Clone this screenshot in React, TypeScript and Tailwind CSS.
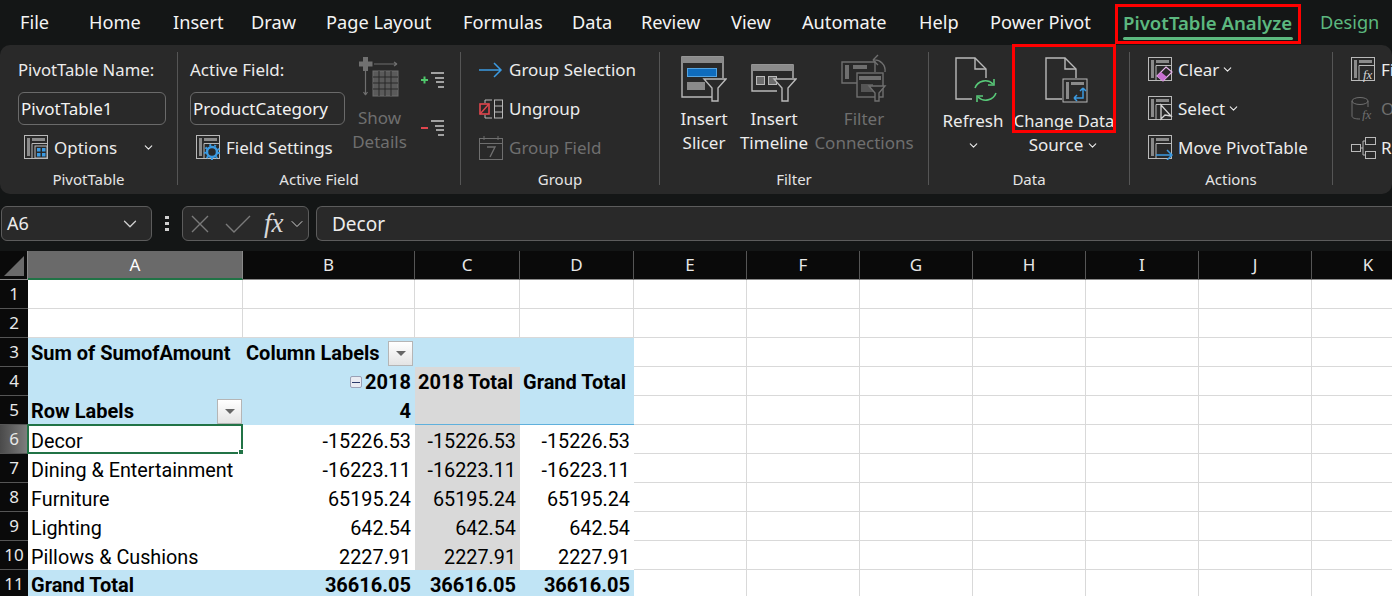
import type { ReactNode } from 'react'
import { ChevronDown } from 'lucide-react'

const tabs = [
  { label: 'File', w: 'w-[69px]' },
  { label: 'Home', w: 'w-[84px]' },
  { label: 'Insert', w: 'w-[78px]' },
  { label: 'Draw', w: 'w-[75px]' },
  { label: 'Page Layout', w: 'w-[137px]' },
  { label: 'Formulas', w: 'w-[109px]' },
  { label: 'Data', w: 'w-[69px]' },
  { label: 'Review', w: 'w-[90px]' },
  { label: 'View', w: 'w-[71px]' },
  { label: 'Automate', w: 'w-[117px]' },
  { label: 'Help', w: 'w-[71px]' },
  { label: 'Power Pivot', w: 'w-[133px]' },
]

const S = '#b9b9b9'
const D = '#6f6f6f'

function PivotBase({ children, color = S }: { children?: ReactNode; color?: string }) {
  return (
    <svg width="25" height="25" viewBox="0 0 25 25" fill="none">
      <rect x="0.5" y="0.5" width="23" height="23" stroke={color} />
      <rect x="8" y="3" width="13" height="3" fill="#8a8a8a" />
      <rect x="3" y="3" width="3" height="18" fill="#8a8a8a" />
      <path d="M8 8.5H23M8 8.5V23" stroke={color} />
      {children}
    </svg>
  )
}

function DocIcon({ children, className }: { children?: ReactNode; className?: string }) {
  return (
    <svg width="46" height="46" viewBox="0 0 46 46" fill="none" className={className}>
      <path d="M17 42H1V1H20L31 12V21" stroke={S} strokeWidth="1.4" />
      <path d="M20 1V12H31" stroke={S} strokeWidth="1.4" />
      {children}
    </svg>
  )
}

function SlicerIcon() {
  return (
    <svg width="46" height="46" viewBox="0 0 46 46" fill="none">
      <path d="M34 41H1V1H42V22" stroke={S} strokeWidth="1.4" />
      <rect x="1" y="1" width="41" height="6" fill="#8a8a8a" />
      <rect x="6.5" y="12.5" width="29" height="8" fill="#0f6cbd" stroke="#56a4e0" />
      <rect x="6" y="26" width="18" height="8" fill="#8a8a8a" />
      <path d="M23 23H45L37 32V45H31V32Z" fill="#292929" stroke={S} strokeWidth="1.4" />
    </svg>
  )
}

function TimelineIcon() {
  return (
    <svg width="46" height="38" viewBox="0 0 46 38" fill="none">
      <path d="M26 27H1V1H42V14" stroke={S} strokeWidth="1.4" />
      <rect x="1" y="1" width="41" height="6" fill="#8a8a8a" />
      <rect x="5.5" y="12.5" width="8" height="8" stroke={S} fill="#6d6d6d" />
      <rect x="17.5" y="12.5" width="8" height="8" stroke={S} fill="#6d6d6d" />
      <path d="M23 15H45L37 24V37H31V24Z" fill="#292929" stroke={S} strokeWidth="1.4" />
    </svg>
  )
}

function ConnectionsIcon() {
  return (
    <svg width="46" height="48" viewBox="0 0 46 48" fill="none">
      <path d="M34 18V8H1V29H16" stroke={D} strokeWidth="1.4" />
      <rect x="4" y="11" width="4" height="14" fill={D} />
      <rect x="12" y="11" width="14" height="4" fill={D} />
      <path d="M32 6C39 5 45 11 44 18M32 6L37 1M32 6L37 11" stroke={D} strokeWidth="1.4" />
      <rect x="16" y="19" width="26" height="24" fill="#292929" stroke={D} strokeWidth="1.4" />
      <rect x="18" y="22" width="22" height="4" fill={D} />
      <rect x="20" y="30" width="12" height="8" fill="#555" />
      <path d="M28 32H44L38 39V47H34V39Z" fill="#292929" stroke={D} strokeWidth="1.4" />
    </svg>
  )
}

function ShowDetailsIcon() {
  return (
    <svg width="42" height="42" viewBox="0 0 42 42" fill="none">
      <path d="M4 2H9V6.5H13.5V11.5H9V16H4V11.5H-0.5V6.5H4Z" fill="#707070" />
      <path d="M15 9H38M38 9L35 7M38 9L35 11M6.5 16V40M6.5 40L4.5 37M6.5 40L8.5 37" stroke={D} strokeWidth="1.2" />
      <rect x="14" y="16" width="25" height="25" fill="#5a5a5a" stroke={D} />
      <path d="M20 16V41M26 16V41M32 16V41M14 22H39M14 28H39M14 34H39" stroke="#292929" />
    </svg>
  )
}

function ExpandIcon({ minus }: { minus?: boolean }) {
  return (
    <svg width="24" height="18" viewBox="0 0 24 18" fill="none">
      <path d="M10 2H23M14 7H23M15 11H23M17 16H23" stroke="#c9c9c9" strokeWidth="1.4" />
      {minus ? (
        <path d="M0 9H7" stroke="#e0464e" strokeWidth="2" />
      ) : (
        <path d="M0 9H7M3.5 5.5V12.5" stroke="#4fc76b" strokeWidth="2" />
      )}
    </svg>
  )
}

function SmallRow({ icon, label, dim, chevron }: { icon: ReactNode; label: string; dim?: boolean; chevron?: boolean }) {
  return (
    <div className="flex h-[39px] items-center">
      <div className="flex w-[30px] shrink-0 items-center">{icon}</div>
      <span className={dim ? 'text-[#6f6f6f]' : 'text-[#ececec]'}>{label}</span>
      {chevron && <ChevronDown size={13} strokeWidth={2} className="ml-[2px] text-[#ececec]" />}
    </div>
  )
}

function LargeButton({ icon, lines, w, dim, iconBox = 'h-[57px] pb-[5px]' }: { icon: ReactNode; lines: ReactNode[]; w: string; dim?: boolean; iconBox?: string }) {
  return (
    <div className={`flex flex-col items-center ${w} ${dim ? 'text-[#6f6f6f]' : 'text-[#ececec]'}`}>
      <div className={`flex items-end justify-center ${iconBox}`}>{icon}</div>
      {lines.map((l, i) => (
        <div key={i} className="flex h-[24px] items-center justify-center whitespace-nowrap">
          {l}
        </div>
      ))}
    </div>
  )
}

function Group({ w, pad = '', label, children }: { w: string; pad?: string; label: string; children: ReactNode }) {
  return (
    <div className={`flex shrink-0 flex-col ${w}`}>
      <div className={`flex h-[118px] ${pad}`}>{children}</div>
      <div className="flex h-[22px] items-center justify-center text-[15px] text-[#e4e4e4]">{label}</div>
    </div>
  )
}

function Sep() {
  return <div className="mt-[2px] h-[133px] w-px shrink-0 bg-[#555555]" />
}

function TextBox({ w, value }: { w: string; value: string }) {
  return (
    <div className={`flex h-[33px] items-center rounded-[6px] border border-[#6a6a6a] pl-[2px] text-[#f2f2f2] ${w}`}>{value}</div>
  )
}

function Ribbon() {
  return (
    <div className="flex h-[149px] shrink-0 items-start overflow-hidden rounded-[10px] bg-[#292929] pt-[5px] text-[17px]">
      <Group w="w-[177px]" pad="pl-[18px]" label="PivotTable">
        <div className="flex flex-col">
          <div className="flex h-[39px] items-center text-[16.7px] text-[#ececec]">PivotTable Name:</div>
          <div className="flex h-[39px] items-center">
            <TextBox w="w-[148px]" value="PivotTable1" />
          </div>
          <div className="flex h-[39px] items-center pl-[6px] text-[#ececec]">
            <PivotBase>
              <rect x="11" y="11" width="12" height="12" fill="#292929" stroke={S} />
              <rect x="13" y="13" width="3.5" height="3.5" fill="#3b9ae1" />
              <rect x="13" y="18" width="3.5" height="3.5" fill="#3b9ae1" />
              <rect x="18" y="13" width="3.5" height="3.5" fill="#3b9ae1" />
              <rect x="18" y="18" width="3.5" height="3.5" fill="#3b9ae1" />
            </PivotBase>
            <span className="ml-[5px]">Options</span>
            <ChevronDown size={13} strokeWidth={2} className="ml-[25px]" />
          </div>
        </div>
      </Group>
      <Sep />
      <Group w="w-[282px]" pad="pl-[12px]" label="Active Field">
        <div className="flex w-[162px] flex-col">
          <div className="flex h-[39px] items-center text-[#ececec]">Active Field:</div>
          <div className="flex h-[39px] items-center">
            <TextBox w="w-[155px]" value="ProductCategory" />
          </div>
          <div className="flex h-[39px] items-center pl-[6px] text-[#ececec]">
            <PivotBase>
              <circle cx="16" cy="17" r="5" fill="#292929" stroke="#3b9ae1" strokeWidth="2.5" />
              <circle cx="16" cy="17" r="7" stroke="#3b9ae1" strokeDasharray="2 3" strokeWidth="2" />
            </PivotBase>
            <span className="ml-[5px] whitespace-nowrap">Field Settings</span>
          </div>
        </div>
        <LargeButton w="w-[55px]" dim icon={<ShowDetailsIcon />} iconBox="h-[56px] pb-[9px]" lines={['Show', 'Details']} />
        <div className="ml-[14px] flex flex-col gap-[30px] pt-[21px]">
          <ExpandIcon />
          <ExpandIcon minus />
        </div>
      </Group>
      <Sep />
      <Group w="w-[198px]" pad="pl-[18px]" label="Group">
        <div className="flex flex-col">
          <SmallRow
            label="Group Selection"
            icon={
              <svg width="24" height="18" viewBox="0 0 24 18" fill="none">
                <path d="M0 9H22M15 2L22 9L15 16" stroke="#3b9ae1" strokeWidth="1.5" />
              </svg>
            }
          />
          <SmallRow
            label="Ungroup"
            icon={
              <svg width="24" height="20" viewBox="0 0 24 20" fill="none">
                <rect x="1" y="5" width="9" height="10" stroke="#e0464e" strokeWidth="1.6" />
                <path d="M1 15L10 5" stroke="#e0464e" strokeWidth="1.4" />
                <path d="M13 1H6V4M13 19H6V16" stroke={S} />
                <rect x="15.5" y="1" width="8" height="18" stroke={S} />
                <path d="M15.5 7H23.5M15.5 13H23.5" stroke={S} />
              </svg>
            }
          />
          <SmallRow
            dim
            label="Group Field"
            icon={
              <svg width="24" height="24" viewBox="0 0 24 24" fill="none">
                <rect x="0.5" y="2.5" width="23" height="21" stroke={D} />
                <path d="M0.5 7.5H23.5M5 0V4M19 0V4" stroke={D} />
                <path d="M8 11H16L11 21" stroke={D} strokeWidth="1.4" />
              </svg>
            }
          />
        </div>
      </Group>
      <Sep />
      <Group w="w-[268px]" pad="pl-[9px]" label="Filter">
        <LargeButton w="w-[70px]" icon={<SlicerIcon />} lines={['Insert', 'Slicer']} />
        <LargeButton w="w-[70px]" icon={<TimelineIcon />} lines={['Insert', 'Timeline']} />
        <LargeButton w="w-[110px]" dim icon={<ConnectionsIcon />} lines={['Filter', 'Connections']} />
      </Group>
      <Sep />
      <Group w="w-[200px]" pad="pl-[0px]" label="Data">
        <LargeButton
          w="w-[88px]"
          iconBox="h-[59px] pb-[6px]"
          icon={
            <DocIcon className="ml-[10px]">
              <path d="M20 31A11 11 0 0 1 38 27M41 36A11 11 0 0 1 23 40" stroke="#58c878" strokeWidth="1.6" />
              <path d="M39 22V28H33M22 45V39H28" stroke="#58c878" strokeWidth="1.6" />
            </DocIcon>
          }
          lines={['Refresh', <ChevronDown key="c" size={13} strokeWidth={2} />]}
        />
        <LargeButton
          w="w-[94px]"
          iconBox="h-[59px] pb-[6px]"
          icon={
            <DocIcon className="ml-[8px]">
              <rect x="18" y="22" width="24" height="23" fill="#292929" stroke={S} />
              <rect x="26" y="25" width="13" height="3" fill="#8a8a8a" />
              <rect x="21" y="25" width="3" height="17" fill="#8a8a8a" />
              <path d="M38 31V41H29M38 31L35 34M38 31L41 34M29 41L32 38M29 41L32 44" stroke="#3b9ae1" strokeWidth="1.5" />
            </DocIcon>
          }
          lines={[
            <span key="d" className="text-[16.5px]">
              Change Data
            </span>,
            <span key="s" className="flex items-center">
              Source
              <ChevronDown size={13} strokeWidth={2} className="ml-[3px]" />
            </span>,
          ]}
        />
      </Group>
      <Sep />
      <Group w="w-[202px]" pad="pl-[18px]" label="Actions">
        <div className="flex flex-col">
          <SmallRow
            label="Clear"
            chevron
            icon={
              <PivotBase>
                <path d="M18 10L24 15L15 24L9 19Z" fill="#292929" stroke="#e3b3e8" strokeWidth="1.2" />
                <path d="M15 24L9 19L13 15L19 20Z" fill="#c76fd1" />
              </PivotBase>
            }
          />
          <SmallRow
            label="Select"
            chevron
            icon={
              <PivotBase>
                <path d="M13 9V23L17 19L23 20Z" fill="#292929" stroke="#d5d5d5" strokeWidth="1.3" />
              </PivotBase>
            }
          />
          <SmallRow
            label="Move PivotTable"
            icon={
              <PivotBase>
                <path d="M8 20H24M19 15L24 20L19 25" stroke="#3b9ae1" strokeWidth="1.5" />
              </PivotBase>
            }
          />
        </div>
      </Group>
      <Sep />
      <Group w="w-[59px]" pad="pl-[18px]" label="">
        <div className="flex flex-col">
          <SmallRow
            label="Fi"
            icon={
              <PivotBase>
                <text x="12" y="22" fontFamily="Liberation Serif, serif" fontStyle="italic" fontSize="13" fill="#d5d5d5">
                  fx
                </text>
              </PivotBase>
            }
          />
          <SmallRow
            dim
            label="O"
            icon={
              <svg width="25" height="25" viewBox="0 0 25 25" fill="none">
                <ellipse cx="9" cy="5" rx="8" ry="3.5" stroke={D} />
                <path d="M1 5V20C1 22 4 23 9 23M17 5V11" stroke={D} />
                <text x="11" y="23" fontFamily="Liberation Serif, serif" fontStyle="italic" fontSize="13" fill={D}>
                  fx
                </text>
              </svg>
            }
          />
          <SmallRow
            label="R"
            icon={
              <svg width="25" height="24" viewBox="0 0 25 24" fill="none">
                <rect x="0.5" y="8.5" width="9" height="7" stroke={S} />
                <rect x="14.5" y="1.5" width="10" height="7" stroke={S} />
                <rect x="14.5" y="15.5" width="10" height="7" stroke={S} />
                <path d="M9 12H12M12 5V19M12 5H15M12 19H15" stroke={S} />
              </svg>
            }
          />
        </div>
      </Group>
    </div>
  )
}

function FormulaBar() {
  return (
    <div className="flex h-[57px] shrink-0 items-center pt-[2px] text-[18px] text-[#ececec]">
      <div className="ml-px flex h-[35px] w-[151px] items-center justify-between rounded-[6px] border border-[#5c5c5c] bg-[#292929] pl-[5px] pr-[10px]">
        A6
        <ChevronDown size={22} strokeWidth={1.4} className="text-[#d0d0d0]" />
      </div>
      <div className="mx-[13px] flex w-[4px] flex-col gap-[3px]">
        <div className="h-[3px] w-[4px] bg-[#d0d0d0]" />
        <div className="h-[3px] w-[4px] bg-[#d0d0d0]" />
        <div className="h-[3px] w-[4px] bg-[#d0d0d0]" />
      </div>
      <div className="flex h-[35px] w-[127px] items-center rounded-[6px] border border-[#5c5c5c] bg-[#292929] pl-[7px]">
        <svg width="20" height="20" viewBox="0 0 20 20" fill="none">
          <path d="M2 2L18 18M18 2L2 18" stroke="#7a7a7a" strokeWidth="1.4" />
        </svg>
        <svg width="26" height="20" viewBox="0 0 26 20" fill="none" className="ml-[15px]">
          <path d="M1 10L9 18L25 2" stroke="#7a7a7a" strokeWidth="1.4" />
        </svg>
        <span className="ml-[13px] font-['Liberation_Serif',serif] text-[27px] italic leading-none text-[#d8d8d8]">fx</span>
        <ChevronDown size={20} strokeWidth={1.2} className="ml-[3px] text-[#d0d0d0]" />
      </div>
      <div className="ml-[7px] flex h-[35px] grow items-center rounded-l-[6px] border border-r-0 border-[#5c5c5c] bg-[#292929] pl-[15px] pt-[1px] text-[19px]">Decor</div>
    </div>
  )
}

const columns = ['A', 'B', 'C', 'D', 'E', 'F', 'G', 'H', 'I', 'J', 'K']

type CellSpec = { t?: ReactNode; r?: boolean; b?: boolean; kind?: 'grid' | 'plain' | 'blue' | 'gray'; line?: boolean }

const dataRow = (label: string, v: string): CellSpec[] => [
  { t: label, kind: 'plain' },
  { t: v, r: true, kind: 'plain' },
  { t: v, r: true, kind: 'gray' },
  { t: v, r: true, kind: 'plain' },
]

function FilterButton({ className }: { className: string }) {
  return (
    <div className={`flex h-[25px] w-[25px] shrink-0 items-center justify-center border border-[#b5b5b5] bg-gradient-to-b from-[#ffffff] to-[#e4e4e4] ${className}`}>
      <div className="h-0 w-0 border-x-[5px] border-t-[5px] border-x-transparent border-t-[#666666]" />
    </div>
  )
}

const rows: CellSpec[][] = [
  [{}, {}, {}, {}],
  [{}, {}, {}, {}],
  [
    { t: 'Sum of SumofAmount', b: true, kind: 'blue' },
    {
      t: (
        <span className="flex w-full items-center justify-between">
          Column Labels
          <FilterButton className="-mr-[2px]" />
        </span>
      ),
      b: true,
      kind: 'blue',
    },
    { kind: 'blue' },
    { kind: 'blue' },
  ],
  [
    { kind: 'blue' },
    {
      t: (
        <span className="flex items-center gap-[3px]">
          <span className="flex h-[12px] w-[12px] items-center justify-center rounded-[2px] border border-[#9aa0b5] bg-[#e9ebf2]">
            <span className="h-px w-[8px] bg-[#2b3a6b]" />
          </span>
          2018
        </span>
      ),
      r: true,
      b: true,
      kind: 'blue',
    },
    { t: '2018 Total', b: true, kind: 'gray' },
    { t: 'Grand Total', b: true, kind: 'blue' },
  ],
  [
    {
      t: (
        <span className="flex w-full items-center justify-between">
          Row Labels
          <FilterButton className="-mr-[3px]" />
        </span>
      ),
      b: true,
      kind: 'blue',
      line: true,
    },
    { t: '4', r: true, b: true, kind: 'blue', line: true },
    { kind: 'gray', line: true },
    { kind: 'blue', line: true },
  ],
  dataRow('Decor', '-15226.53'),
  dataRow('Dining & Entertainment', '-16223.11'),
  dataRow('Furniture', '65195.24'),
  dataRow('Lighting', '642.54'),
  dataRow('Pillows & Cushions', '2227.91').map((c) => ({ ...c, line: true })),
  [
    { t: 'Grand Total', b: true, kind: 'blue' },
    { t: '36616.05', r: true, b: true, kind: 'blue' },
    { t: '36616.05', r: true, b: true, kind: 'blue' },
    { t: '36616.05', r: true, b: true, kind: 'blue' },
  ],
]

function Cell({ t, r, b, kind = 'grid', line }: CellSpec) {
  const fill =
    kind === 'blue'
      ? 'bg-[#c0e4f5]'
      : kind === 'gray'
        ? 'bg-[#d9d9d9]'
        : 'bg-white'
  const border = line
    ? 'border-b border-[#5fb0dc]'
    : kind === 'grid'
      ? 'border-r border-b border-[#d9d9d9]'
      : 'border-b border-transparent'
  return (
    <div className={`flex min-w-0 items-center whitespace-nowrap pl-[3px] pr-[4px] text-black ${fill} ${border} ${r ? 'justify-end' : ''} ${b ? 'text-[20px] font-bold' : 'pt-[2px] text-[19.8px]'}`}>
      {t}
    </div>
  )
}

function Sheet() {
  return (
    <div className="relative grid grid-cols-[28px_215px_172px_105px_114px_113px_113px_113px_113px_113px_113px_113px_80px] grid-rows-[29px] auto-rows-[29px] font-['Roboto',sans-serif]">
      <div className="flex items-end justify-end border-r border-b border-[#8a8a8a] bg-[#0a0a0a] pb-[3px] pr-[3px]">
        <div className="h-0 w-0 border-b-[20px] border-l-[20px] border-b-[#6a6a6a] border-l-transparent" />
      </div>
      {columns.map((c) => (
        <div
          key={c}
          className={`flex items-center justify-center border-r font-['Noto_Sans',sans-serif] text-[17px] ${
            c === 'A' ? 'border-b-2 border-r-[#8a8a8a] border-b-[#217346] bg-[#6a6a6a] text-white' : 'border-b border-r-[#555555] border-b-[#8a8a8a] bg-[#0a0a0a] text-[#e8e8e8]'
          }`}
        >
          {c}
        </div>
      ))}
      <div className="border-b border-[#8a8a8a] bg-[#0a0a0a]" />
      {rows.map((cells, i) => (
        <div key={i} className="contents">
          <div
            className={`flex items-center justify-center border-b border-[#555555] font-['Noto_Sans',sans-serif] text-[17px] text-[#e8e8e8] ${
              i === 5 ? 'bg-gradient-to-r from-[#4a4a4a] to-[#808080]' : 'bg-[#0a0a0a]'
            }`}
          >
            {i + 1}
          </div>
          {cells.map((c, j) => (
            <div key={j} className="grid">
              <Cell {...c} />
            </div>
          ))}
          {Array.from({ length: 8 }).map((_, j) => (
            <div key={j} className="grid">
              <Cell />
            </div>
          ))}
        </div>
      ))}
      <div className="pointer-events-none absolute left-[27px] top-[173px] h-[30px] w-[216px] border-2 border-[#217346]">
        <div className="absolute -bottom-[3px] -right-[3px] h-[6px] w-[6px] border border-white bg-[#217346]" />
      </div>
    </div>
  )
}

export default function App() {
  return (
    <div className="relative flex h-[596px] w-[1392px] flex-col overflow-hidden bg-[#141616] font-['Noto_Sans',sans-serif]">
      <div className="flex h-[45px] shrink-0 items-center pl-[20px] text-[18.2px] text-[#f4f4f4]">
        {tabs.map((t) => (
          <div key={t.label} className={`shrink-0 whitespace-nowrap ${t.w}`}>
            {t.label}
          </div>
        ))}
        <div className="relative w-[197px] shrink-0 whitespace-nowrap text-[18.6px] font-semibold text-[#5cb87f]">
          PivotTable Analyze
          <div className="absolute -bottom-[4px] left-0 h-[3px] w-[170px] rounded-full bg-[#5cb87f]" />
        </div>
        <div className="shrink-0 text-[#5cb87f]">Design</div>
      </div>
      <Ribbon />
      <FormulaBar />
      <Sheet />
      {/* annotation boxes */}
      <div className="absolute left-[1115px] top-[4px] h-[40px] w-[186px] border-[3px] border-[#ff0000]" />
      <div className="absolute left-[1012px] top-[44px] h-[89px] w-[104px] border-[3px] border-[#ff0000]" />
    </div>
  )
}
